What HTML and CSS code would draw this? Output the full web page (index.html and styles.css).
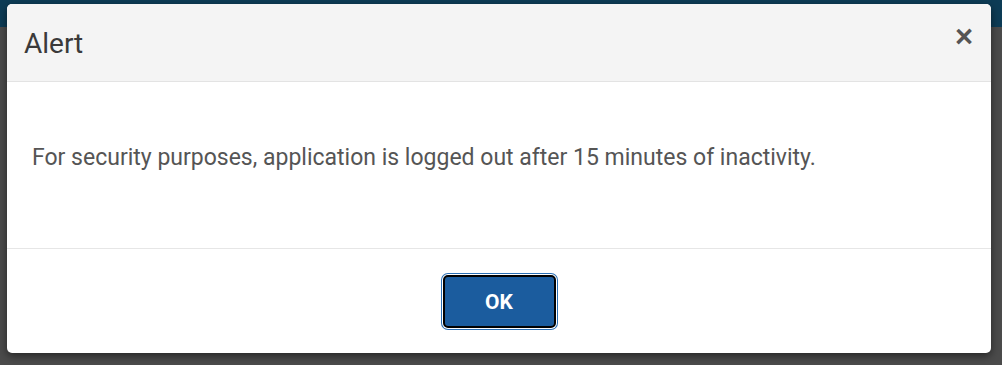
FILE: index.html
```html
<!DOCTYPE html>
<html>
<head>
<meta charset="utf-8">
<link rel="stylesheet" href="styles.css">
</head>
<body>
<div class="page">
  <div class="modal">
    <div class="modal-header">
      <h4 class="modal-title">Alert</h4>
      <button class="close" aria-label="Close">&times;</button>
    </div>
    <div class="modal-body">
      <p>For security purposes, application is logged out after 15 minutes of inactivity.</p>
    </div>
    <div class="modal-footer">
      <button class="btn-ok">OK</button>
    </div>
  </div>
</div>
</body>
</html>
```
FILE: styles.css
```css
html, body {
  margin: 0;
  padding: 0;
}
body {
  width: 1002px;
  height: 365px;
  overflow: hidden;
  font-family: Roboto, "Liberation Sans", sans-serif;
}
.page {
  height: 365px;
  background: linear-gradient(to bottom, #0d3c56 0, #0d3c56 27px, #4b4b4b 27px, #4b4b4b 100%);
  padding: 4px 0 0 7px;
  box-sizing: border-box;
}
.modal {
  width: 984px;
  height: 349px;
  background: #fff;
  border-radius: 5px;
  box-shadow: 0 3px 9px rgba(0,0,0,0.5);
  display: flex;
  flex-direction: column;
  overflow: hidden;
}
.modal-header {
  height: 77px;
  background: #f4f4f4;
  border-bottom: 1px solid #e3e3e3;
  display: flex;
  align-items: center;
  justify-content: space-between;
  padding: 0 18px 0 17px;
  flex: none;
}
.modal-title {
  margin: 0;
  font-size: 28px;
  font-weight: 400;
  color: #3a3a3a;
  padding-top: 2px;
}
.close {
  border: 0;
  background: none;
  padding: 0;
  font-family: "Liberation Sans", Arial, sans-serif;
  font-size: 31px;
  font-weight: 700;
  color: #555;
  line-height: 1;
  margin-top: -12px;
}
.modal-body {
  height: 167px;
  border-bottom: 1px solid #e6e6e6;
  display: flex;
  align-items: center;
  padding: 0 25px;
  flex: none;
  box-sizing: border-box;
}
.modal-body p {
  margin: 0;
  font-size: 23px;
  color: #555;
  padding-bottom: 16px;
}
.modal-footer {
  flex: 1;
  display: flex;
  align-items: center;
  justify-content: center;
  padding-top: 1px;
}
.btn-ok {
  width: 113px;
  height: 53px;
  box-sizing: border-box;
  background: #1b5c9e;
  color: #fff;
  font-family: Roboto, "Liberation Sans", sans-serif;
  font-size: 21px;
  font-weight: 700;
  border: 2px solid #000;
  border-radius: 5px;
  box-shadow: 0 0 0 1px #fff, 0 0 0 2px #2a6fb5;
  margin-left: 0;
}
```
